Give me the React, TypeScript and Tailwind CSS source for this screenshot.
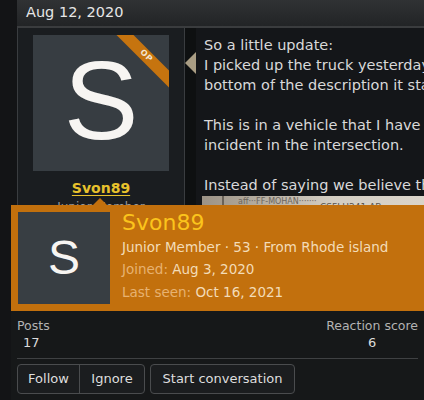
import React from "react";

const font = { fontFamily: '"DejaVu Sans", Verdana, sans-serif' };

function Ribbon() {
  return (
    <div className="absolute left-[63px] top-[15px] w-[100px] h-[12px] rotate-45 bg-[#c6740f] flex items-center justify-center">
      <span className="text-[8px] font-bold leading-none text-[#f4e6d2] tracking-[0.5px]">OP</span>
    </div>
  );
}

function UserCell() {
  return (
    <div className="w-[168px] shrink-0 border-x border-[#3a3d40] bg-[#1a1d20] pt-[7px] pb-4 flex flex-col items-center">
      <div className="relative w-[136px] h-[136px] overflow-hidden bg-[#373d42] flex items-center justify-center">
        <span
          className="text-[112px] leading-none text-[#f7f5f2] -mt-[4px]"
          style={{ fontFamily: '"Liberation Sans", Arial, sans-serif' }}
        >
          S
        </span>
        <Ribbon />
      </div>
      <a className="mt-[8px] text-[14px] font-bold leading-[18px] text-[#e8c22c] underline decoration-[#e8c22c] underline-offset-2">
        Svon89
      </a>
      <div className="mt-[3px] text-[12px] leading-[14px] text-[#9b9b9b]">Junior Member</div>
    </div>
  );
}

function MessageCell() {
  return (
    <div className="flex">
      <div className="relative w-[11px] shrink-0 bg-[#0e1011]">
        <div className="absolute left-0 top-[24px] w-0 h-0 border-y-[11px] border-y-transparent border-r-[11px] border-r-[#a99d84]" />
      </div>
      <div className="w-[400px] bg-[#141619] pl-[8px] pt-[7px] text-[14.5px] leading-[20px] text-[#d9d9d9] whitespace-nowrap">
        <p>So a little update:</p>
        <p>I picked up the truck yesterday and at the very</p>
        <p>bottom of the description it states</p>
        <p className="h-[20px]" />
        <p>This is in a vehicle that I have had no prior</p>
        <p>incident in the intersection.</p>
        <p className="h-[20px]" />
        <p>Instead of saying we believe the vehicle was</p>
        <div className="-ml-[2px] mt-[1px] h-[30px] w-[260px] relative overflow-hidden bg-gradient-to-r from-[#9c9386] via-[#d3cdc2] to-[#ddd7cd]">
          <div className="absolute left-[20px] top-0 h-full w-[2px] bg-[#6a6258]" />
          <span className="absolute left-[36px] top-[1px] text-[8px] leading-[10px] text-[#6b645b]">aff···FF-MOHAN·······</span>
          <span className="absolute left-[118px] top-[6px] text-[9px] leading-[10px] text-[#5a544c]">CSFLH241-AB</span>
        </div>
      </div>
    </div>
  );
}

function MemberCard() {
  return (
    <div className="absolute left-[11px] top-[205px] w-[413px]" style={font}>
      <div className="absolute left-[82px] -top-[7px] w-0 h-0 border-x-[7px] border-x-transparent border-b-[7px] border-b-[#c2700d]" />
      <div className="flex gap-[12px] bg-[#c2700d] p-[7px]">
        <div className="w-[92px] h-[92px] shrink-0 bg-[#383e43] flex items-center justify-center">
          <span
            className="text-[48px] leading-none text-[#f7f5f2]"
            style={{ fontFamily: '"Liberation Sans", Arial, sans-serif' }}
          >
            S
          </span>
        </div>
        <div className="flex flex-col">
          <div className="text-[22px] leading-[22px] text-[#fbc41c]">Svon89</div>
          <div className="mt-[2px] text-[13.5px] leading-[22px] text-[#f3dcb8]">
            Junior Member · 53 · From Rhode island
          </div>
          <div className="text-[13.5px] leading-[22px] text-[#f3dcb8]">
            <span className="text-[#e7b271]">Joined:</span> Aug 3, 2020
          </div>
          <div className="text-[13.5px] leading-[24px] text-[#f3dcb8]">
            <span className="text-[#e7b271]">Last seen:</span> Oct 16, 2021
          </div>
        </div>
      </div>
      <div className="bg-[#161819] px-[6px] pt-[7px] h-[95px]">
        <div className="flex justify-between text-[12.5px] leading-[16px]">
          <div className="flex flex-col items-start">
            <span className="text-[#b3b3b3]">Posts</span>
            <span className="pl-[6px] mt-[1px] text-[#dcdcdc] text-[13px]">17</span>
          </div>
          <div className="flex flex-col items-center">
            <span className="text-[#b3b3b3]">Reaction score</span>
            <span className="mt-[1px] text-[#dcdcdc] text-[13px]">6</span>
          </div>
        </div>
        <div className="mt-[7px] border-t border-[#3f4143]" />
        <div className="mt-[5px] flex gap-[5px] text-[13px] text-[#dedede]">
          <div className="flex h-[30px] rounded-[4px] border border-[#4a4c4e] bg-[#1b1d1f]">
            <button className="w-[62px] flex items-center justify-center border-r border-[#4a4c4e]">Follow</button>
            <button className="w-[64px] flex items-center justify-center">Ignore</button>
          </div>
          <button className="h-[30px] w-[145px] rounded-[4px] border border-[#4a4c4e] bg-[#1b1d1f] flex items-center justify-center">
            Start conversation
          </button>
        </div>
      </div>
    </div>
  );
}

export default function App() {
  return (
    <div className="relative w-[424px] h-[400px] overflow-hidden bg-[#131416]" style={font}>
      <div className="ml-[17px] w-[600px]">
        <div className="h-[28px] bg-gradient-to-b from-[#303234] to-[#222426] border-b-2 border-[#3a3c3e] pl-[9px] text-[14.5px] leading-[25px] text-[#e6e6e6]">
          Aug 12, 2020
        </div>
        <div className="flex h-[400px]">
          <UserCell />
          <MessageCell />
        </div>
      </div>
      <MemberCard />
    </div>
  );
}
